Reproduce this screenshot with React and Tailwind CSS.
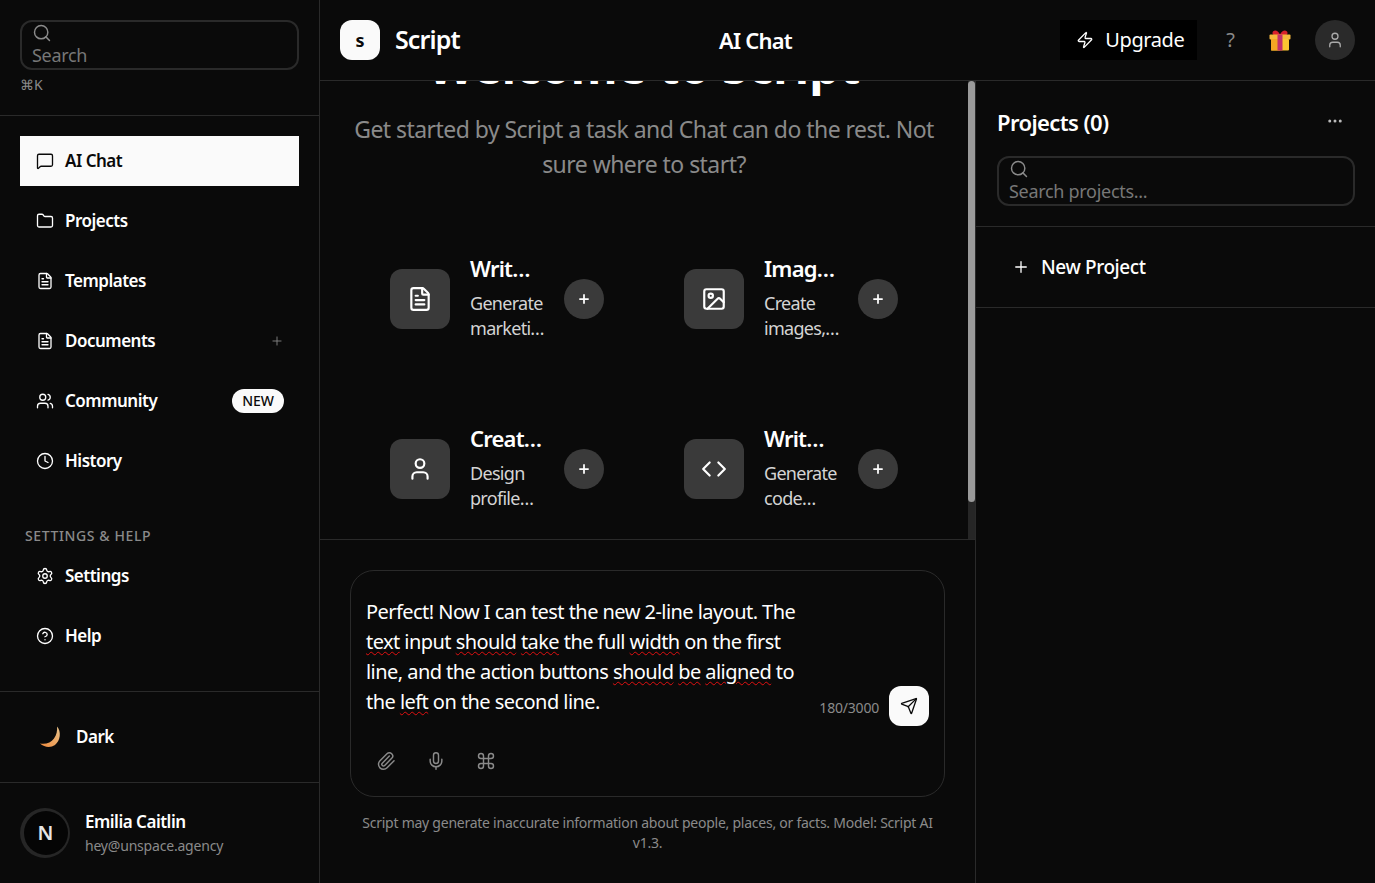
import React from "react";
import { Search, MessageSquare, Folder, FileText, Users, Clock, Settings, CircleHelp, Plus, Image, User, Code, Zap, Paperclip, Mic, Command, Send, Ellipsis } from "lucide-react";

function NavItem({ icon: Icon, label, active, right }) {
  return (
    <div className={`flex items-center h-[50px] pl-4 pr-[15px] ${active ? "bg-[#fafafa] text-[#0a0a0a]" : "text-white"}`}>
      <Icon size={18} strokeWidth={1.75} className="mr-[11px] shrink-0" />
      <span className="text-[17px] font-semibold tracking-[-0.5px]">{label}</span>
      {right && <span className="ml-auto">{right}</span>}
    </div>
  );
}

function Card({ icon: Icon, title, line1, line2 }) {
  return (
    <div className="flex items-center h-[170px] pl-5">
      <div className="w-[60px] h-[60px] rounded-xl bg-[#3a3a3a] flex items-center justify-center text-white shrink-0">
        <Icon size={26} strokeWidth={2} />
      </div>
      <div className="w-[94px] pl-5 -mt-[5px] shrink-0">
        <div className="text-[22px] leading-[30px] font-semibold tracking-[-0.8px] text-white whitespace-nowrap">{title}</div>
        <div className="mt-[8px] text-[18px] leading-[25px] tracking-[-0.7px] text-[#d4d4d4] whitespace-nowrap">{line1}<br />{line2}</div>
      </div>
      <div className="ml-5 w-10 h-10 rounded-full bg-[#3a3a3a] flex items-center justify-center text-white shrink-0">
        <Plus size={14} strokeWidth={3} />
      </div>
    </div>
  );
}

function Wavy({ children }) {
  return <span className="underline decoration-wavy decoration-[#e01010] decoration-1 underline-offset-2">{children}</span>;
}

function Gift() {
  return (
    <svg width="24" height="24" viewBox="0 0 24 24">
      <path d="M5 3.5c2-2 5-1 7 3 2-4 5-5 7-3 1.500 2-.5 4-2 4H7c-1.500 0-3.500-2-2-4z" fill="#d8202c" />
      <rect x="1.500" y="6.500" width="21" height="5" rx="1" fill="#f6b73c" />
      <rect x="3" y="11" width="18" height="11.500" rx="1" fill="#fbc531" />
      <rect x="3" y="11" width="9" height="11.500" fill="#f5a623" />
      <rect x="9.500" y="6.500" width="5" height="16" fill="#c2306a" />
    </svg>
  );
}

function Moon() {
  return (
    <svg width="24" height="24" viewBox="0 0 24 24">
      <defs>
        <linearGradient id="m" x1="1" y1="0" x2="0" y2="1">
          <stop offset="0" stopColor="#e8c28a" />
          <stop offset="1" stopColor="#f08a3c" />
        </linearGradient>
      </defs>
      <path d="M18 1.500c4.500 5 3.500 14-2 18.500-4.500 3-10.500 2.500-15-1.500 5.500 1 11-.5 14-5 2.500-3.500 3.500-8 3-12z" fill="url(#m)" />
    </svg>
  );
}

export default function App() {
  return (
    <div className="flex h-screen w-full overflow-hidden bg-[#0a0a0a] text-white font-['Noto_Sans',sans-serif]">
      {/* Sidebar */}
      <aside className="w-[320px] shrink-0 border-r border-[#2a2a2a] flex flex-col">
        <div className="h-[116px] shrink-0 border-b border-[#2a2a2a] px-5 pt-5">
          <div className="h-[50px] rounded-xl border-2 border-[#2a2a2a] pl-[10px] overflow-hidden flex flex-col text-[#8a8a8a]">
            <Search size={20} strokeWidth={1.75} className="mt-px shrink-0" />
            <span className="text-[18px] leading-[24px] text-[#777] tracking-[-0.3px]">Search</span>
          </div>
          <div className="text-[14px] leading-[20px] mt-[5px] text-[#8a8a8a]">⌘K</div>
        </div>
        <nav className="px-5 pt-5 flex flex-col gap-[10px]">
          <NavItem icon={MessageSquare} label="AI Chat" active />
          <NavItem icon={Folder} label="Projects" />
          <NavItem icon={FileText} label="Templates" />
          <NavItem icon={FileText} label="Documents" right={<Plus size={14} strokeWidth={1.5} className="text-[#8a8a8a]" />} />
          <NavItem icon={Users} label="Community" right={<span className="block rounded-full bg-[#fafafa] text-[#0a0a0a] text-[14px] leading-[24px] px-[10px] font-medium">NEW</span>} />
          <NavItem icon={Clock} label="History" />
        </nav>
        <div className="px-5 mt-[40px] flex flex-col gap-[10px]">
          <div className="pl-[5px] h-[20px] text-[14px] leading-[20px] font-medium tracking-[0.6px] text-[#8a8a8a]">SETTINGS &amp; HELP</div>
          <div className="-mt-[10px] pt-[5px]"><NavItem icon={Settings} label="Settings" /></div>
          <NavItem icon={CircleHelp} label="Help" />
        </div>
        <div className="mt-[30px] h-[92px] shrink-0 border-t border-b border-[#2a2a2a] pl-[39px] flex items-center">
          <Moon />
          <span className="ml-[13px] text-[17px] font-semibold tracking-[-0.5px]">Dark</span>
        </div>
        <div className="flex items-center px-5 flex-1">
          <div className="w-[50px] h-[50px] rounded-full bg-[#262626] flex items-center justify-center shrink-0 pl-[1px]">
            <div className="w-[44px] h-[44px] rounded-full bg-[#050505] flex items-center justify-center text-[20px] text-[#e5e5e5] font-semibold">N</div>
          </div>
          <div className="ml-[15px]">
            <div className="text-[17px] leading-[24px] font-semibold tracking-[-0.5px]">Emilia Caitlin</div>
            <div className="text-[14px] leading-[20px] mt-[2px] text-[#8a8a8a] tracking-[-0.2px]">hey@unspace.agency</div>
          </div>
        </div>
      </aside>

      {/* Right of sidebar */}
      <div className="flex-1 flex flex-col min-w-0">
        <header className="relative h-[81px] shrink-0 border-b border-[#2a2a2a] flex items-center pl-5 pr-5">
          <div className="w-10 h-10 rounded-xl bg-[#fafafa] flex items-center justify-center text-[#0a0a0a] text-[18px] font-bold">s</div>
          <span className="ml-[15px] text-[25px] font-semibold tracking-[-0.9px]">Script</span>
          <span className="absolute left-[399px] text-[22px] font-semibold tracking-[-0.8px]">AI Chat</span>
          <div className="ml-auto flex items-center">
            <div className="h-10 w-[137px] bg-black flex items-center pl-4 text-[20px] tracking-[-0.4px]">
              <Zap size={18} strokeWidth={1.75} className="mr-[11px]" />
              Upgrade
            </div>
            <span className="ml-[29px] text-[20px] text-[#8a8a8a]">?</span>
            <span className="ml-[33px] flex"><Gift /></span>
            <div className="ml-[23px] w-10 h-10 rounded-full bg-[#2a2a2a] flex items-center justify-center text-[#aaa]">
              <User size={18} strokeWidth={1.75} />
            </div>
          </div>
        </header>

        <div className="flex-1 flex min-h-0">
          {/* Main column */}
          <main className="w-[655px] shrink-0 flex flex-col">
            <div className="relative h-[459px] shrink-0 overflow-hidden border-b border-[#2a2a2a]">
              <div className="w-[648px]">
                <h1 className="-mt-[43px] text-center text-[48px] leading-[56px] font-bold">Welcome to Script</h1>
                <p className="mt-[18px] mx-auto w-[600px] text-center text-[23px] leading-[35px] tracking-[-0.55px] text-[#8a8a8a]">Get started by Script a task and Chat can do the rest. Not sure where to start?</p>
                <div className="ml-[50px] mt-[32px] w-[588px] grid grid-cols-2">
                  <Card icon={FileText} title="Writ…" line1="Generate" line2="marketi…" />
                  <Card icon={Image} title="Imag…" line1="Create" line2="images,…" />
                  <Card icon={User} title="Creat…" line1="Design" line2="profile…" />
                  <Card icon={Code} title="Writ…" line1="Generate" line2="code…" />
                </div>
              </div>
              <div className="absolute top-0 right-0 bottom-0 w-[7px] bg-[#262626]">
                <div className="h-[421px] rounded-full bg-[#9a9a9a]" />
              </div>
            </div>

            <div className="px-[30px] pt-[30px] flex-1">
              <div className="relative h-[227px] rounded-3xl border border-[#2a2a2a] pl-[15px] pt-[26px]">
                <p className="w-[440px] text-[20px] leading-[30px] tracking-[-0.55px] text-white">
                  Perfect! Now I can test the new 2-line layout. The{" "}
                  <Wavy>text</Wavy> input <Wavy>should</Wavy> <Wavy>take</Wavy> the full <Wavy>width</Wavy> on the first
                  line, and the action buttons <Wavy>should</Wavy> <Wavy>be</Wavy> <Wavy>aligned</Wavy> to the <Wavy>left</Wavy> on the second line.
                </p>
                <div className="absolute right-[15px] top-[115px] flex items-center gap-[10px]">
                  <span className="text-[14px] tracking-[-0.2px] text-[#8a8a8a] mt-[2px]">180/3000</span>
                  <div className="w-10 h-10 rounded-xl bg-[#fafafa] flex items-center justify-center text-[#0a0a0a]">
                    <Send size={18} strokeWidth={1.75} />
                  </div>
                </div>
                <div className="absolute left-[25px] top-[180px] flex items-center gap-[30px] text-[#8a8a8a]">
                  <Paperclip size={20} strokeWidth={1.75} />
                  <Mic size={20} strokeWidth={1.75} />
                  <Command size={20} strokeWidth={1.75} />
                </div>
              </div>
              <p className="mt-4 text-center text-[14px] leading-[20px] tracking-[-0.25px] text-[#8a8a8a]">Script may generate inaccurate information about people, places, or facts. Model: Script AI v1.3.</p>
            </div>
          </main>

          {/* Right panel */}
          <section className="flex-1 border-l border-[#2a2a2a] flex flex-col min-w-0">
            <div className="h-[146px] shrink-0 border-b border-[#2a2a2a] pl-[21px] pr-5 pt-[25px]">
              <div className="flex items-center justify-between h-[32px]">
                <span className="text-[22px] font-semibold tracking-[-0.6px]">Projects (0)</span>
                <Ellipsis size={18} className="text-[#bbb] mr-[11px] -mt-[3px]" />
              </div>
              <div className="mt-[18px] h-[50px] rounded-xl border-2 border-[#2a2a2a] pl-[10px] overflow-hidden flex flex-col text-[#8a8a8a]">
                <Search size={20} strokeWidth={1.75} className="mt-px shrink-0" />
                <span className="text-[18px] leading-[24px] text-[#777] tracking-[-0.3px]">Search projects...</span>
              </div>
            </div>
            <div className="h-[81px] shrink-0 border-b border-[#2a2a2a] flex items-center pl-[36px]">
              <Plus size={18} strokeWidth={1.75} />
              <span className="ml-[11px] text-[19px] font-medium tracking-[-0.4px]">New Project</span>
            </div>
          </section>
        </div>
      </div>
    </div>
  );
}
